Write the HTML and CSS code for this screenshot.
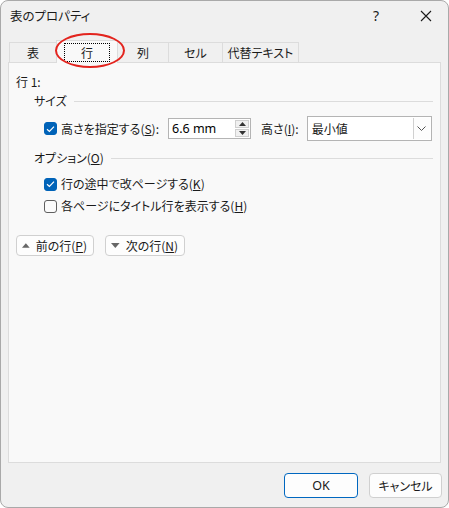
FILE: index.html
```html
<!DOCTYPE html>
<html lang="ja">
<head>
<meta charset="utf-8">
<link rel="stylesheet" href="styles.css">
</head>
<body>
<div class="window">
  <div class="titlebar">
    <span class="title">表のプロパティ</span>
    <span class="tb-btn help">?</span>
    <span class="tb-btn close">
      <svg width="12" height="12" viewBox="0 0 12 12"><path d="M1 1L11 11M11 1L1 11" stroke="#1a1a1a" stroke-width="1.1" fill="none"/></svg>
    </span>
  </div>
  <div class="tabs">
    <div class="tab t1">表</div>
    <div class="tab t2 active"><span class="focus">行</span></div>
    <div class="tab t3">列</div>
    <div class="tab t4">セル</div>
    <div class="tab t5">代替テキスト</div>
    <div class="annot"></div>
  </div>
  <div class="panel">
    <div class="rowlabel">行 1:</div>
    <div class="group">サイズ</div>
    <div class="sizerow">
      <span class="cb checked"><svg width="9" height="8" viewBox="0 0 9 8"><path d="M1 4.2L3.4 6.4L8 1.6" stroke="#fff" stroke-width="1.2" fill="none"/></svg></span>
      <span class="lbl">高さを指定する(<u>S</u>):</span>
      <span class="spin">
        <span class="spin-val">6.6 mm</span>
        <span class="spin-btns">
          <span class="sb"><svg width="7" height="4" viewBox="0 0 7 4"><path d="M0 4L3.5 0L7 4Z" fill="#333"/></svg></span>
          <span class="sb"><svg width="7" height="4" viewBox="0 0 7 4"><path d="M0 0L3.5 4L7 0Z" fill="#333"/></svg></span>
        </span>
      </span>
      <span class="lbl2">高さ(<u>I</u>):</span>
      <span class="select">
        <span class="sel-val">最小値</span>
        <span class="sel-btn"><svg width="9" height="5" viewBox="0 0 9 5"><path d="M0.5 0.5L4.5 4.5L8.5 0.5" stroke="#555" stroke-width="1" fill="none"/></svg></span>
      </span>
    </div>
    <div class="group g2"><span>オプション(<u>O</u>)</span></div>
    <div class="cbrow r1">
      <span class="cb checked"><svg width="9" height="8" viewBox="0 0 9 8"><path d="M1 4.2L3.4 6.4L8 1.6" stroke="#fff" stroke-width="1.2" fill="none"/></svg></span>
      <span class="lbl">行の途中で改ページする(<u>K</u>)</span>
    </div>
    <div class="cbrow r2">
      <span class="cb"></span>
      <span class="lbl">各ページにタイトル行を表示する(<u>H</u>)</span>
    </div>
    <div class="navrow">
      <span class="btn nav prev"><svg width="9" height="5" viewBox="0 0 9 5"><path d="M0 5L4.5 0L9 5Z" fill="#666"/></svg><span class="nl">前の行(<u>P</u>)</span></span>
      <span class="btn nav next"><svg width="9" height="5" viewBox="0 0 9 5"><path d="M0 0L4.5 5L9 0Z" fill="#666"/></svg><span class="nl">次の行(<u>N</u>)</span></span>
    </div>
  </div>
  <div class="footer">
    <span class="btn ok">OK</span>
    <span class="btn cancel">キャンセル</span>
  </div>
</div>
</body>
</html>
```
FILE: styles.css
```css
* { box-sizing: border-box; }
html, body { margin: 0; padding: 0; background: #ffffff; }
body {
  font-family: "Noto Sans CJK JP", "Noto Sans", sans-serif;
  font-size: 12px;
  color: #1a1a1a;
  font-feature-settings: "palt";
  white-space: nowrap;
}
u { text-decoration: underline; text-underline-offset: 1px; }
.window {
  width: 449px;
  height: 508px;
  background: #f0f0f0;
  border: 1px solid #a9a9a9;
  border-radius: 8px;
  display: flex;
  flex-direction: column;
  overflow: hidden;
}
.titlebar {
  height: 30px;
  display: flex;
  align-items: center;
  padding-left: 9px;
}
.title { flex: 1; line-height: 16px; margin-top: -1px; font-size: 12.5px; }
.tb-btn { display: flex; align-items: center; justify-content: center; }
.help { width: 20px; margin-right: 30px; font-family: "Noto Sans", sans-serif; font-size: 14px; margin-top: -1px; }
.close { width: 20px; margin-right: 12px; }
.tabs {
  position: relative;
  display: flex;
  align-items: flex-end;
  height: 31px;
  padding-left: 8px;
}
.tab {
  height: 20px;
  border: 1px solid #dcdcdc;
  border-bottom: none;
  background: #f0f0f0;
  display: flex;
  align-items: center;
  justify-content: center;
  line-height: 16px;
  margin-left: -1px;
  flex: none;
}
.t1 { width: 48px; margin-left: 0; }
.t2 { width: 62px; }
.t3 { width: 52px; }
.t4 { width: 55px; }
.t5 { width: 77px; }
.tab.active {
  background: #f9f9f9;
  position: relative;
  z-index: 2;
  margin-bottom: -1px;
  height: 23px;
  align-items: flex-end;
  padding-bottom: 1px;
}
.focus {
  display: flex;
  align-items: center;
  justify-content: center;
  width: 46px;
  height: 19px;
  border: 1px dotted #000;
}
.annot {
  position: absolute;
  left: 54px;
  top: 2px;
  width: 70px;
  height: 35px;
  border: 2px solid #e3241e;
  border-radius: 50%;
  z-index: 3;
}
.panel {
  margin: 0 7px 0 7px;
  height: 401px;
  background: #f9f9f9;
  border: 1px solid #dcdcdc;
  padding: 11px 7px 0 7px;
  position: relative;
  z-index: 1;
}
.rowlabel { line-height: 16px; }
.group {
  display: flex;
  align-items: center;
  margin-left: 18px;
  margin-top: 3px;
  line-height: 16px;
}
.group::after {
  content: "";
  flex: 1;
  height: 1px;
  background: #dcdcdc;
  margin-left: 7px;
  margin-right: 0;
}
.g2 { margin-top: 9px; }
.sizerow {
  display: flex;
  align-items: center;
  height: 25px;
  margin-top: 7px;
  margin-left: 28px;
}
.cb {
  width: 13px;
  height: 13px;
  border: 1px solid #5f5f5f;
  border-radius: 3px;
  background: #fbfbfb;
  display: inline-flex;
  align-items: center;
  justify-content: center;
  flex: none;
}
.cb.checked { background: #0063b8; border-color: #0063b8; }
.lbl { margin-left: 4px; line-height: 16px; flex: none; }
.spin {
  display: flex;
  flex: none;
  width: 83px;
  height: 21px;
  margin-left: 9px;
  border: 1px solid #b4b4b4;
  background: #fff;
}
.spin-val { flex: 1; padding-left: 3px; line-height: 19px; font-family: "Noto Sans", sans-serif; font-size: 12.5px; color: #000; }
.spin-btns { display: flex; flex-direction: column; width: 15px; padding: 1px 1px 1px 0; gap: 1px; }
.sb {
  flex: 1;
  background: #f0f0f0;
  border: 1px solid #cfcfcf;
  display: flex;
  align-items: center;
  justify-content: center;
}
.lbl2 { margin-left: 10px; line-height: 16px; flex: none; }
.select {
  display: flex;
  flex: none;
  width: 125px;
  height: 25px;
  margin-left: 8px;
  border: 1px solid #b4b4b4;
  background: #fff;
}
.sel-val { flex: 1; padding-left: 4px; line-height: 23px; }
.sel-btn {
  width: 17px;
  border-left: 1px solid #d0d0d0;
  margin: 1px;
  background: #fdfdfd;
  display: flex;
  align-items: center;
  justify-content: center;
}
.cbrow {
  display: flex;
  align-items: center;
  height: 18px;
  margin-left: 28px;
}
.r1 { margin-top: 9px; }
.r2 { margin-top: 4px; }
.navrow {
  display: flex;
  gap: 11px;
  margin-top: 20px;
}
.btn {
  display: inline-flex;
  align-items: center;
  justify-content: center;
  background: #fdfdfd;
  border: 1px solid #d0d0d0;
  border-radius: 4px;
  line-height: 16px;
  flex: none;
}
.nav { height: 21px; padding: 0 6px 0 5px; gap: 6px; }
.prev { width: 78px; }
.next { width: 80px; }
.footer {
  flex: 1;
  display: flex;
  justify-content: flex-end;
  align-items: flex-start;
  gap: 11px;
  padding-top: 10px;
  padding-right: 6px;
}
.ok {
  width: 74px;
  height: 25px;
  border-color: #0067c0;
  font-family: "Noto Sans", sans-serif;
  font-size: 12.5px;
}
.cancel { width: 73px; height: 25px; }
```
